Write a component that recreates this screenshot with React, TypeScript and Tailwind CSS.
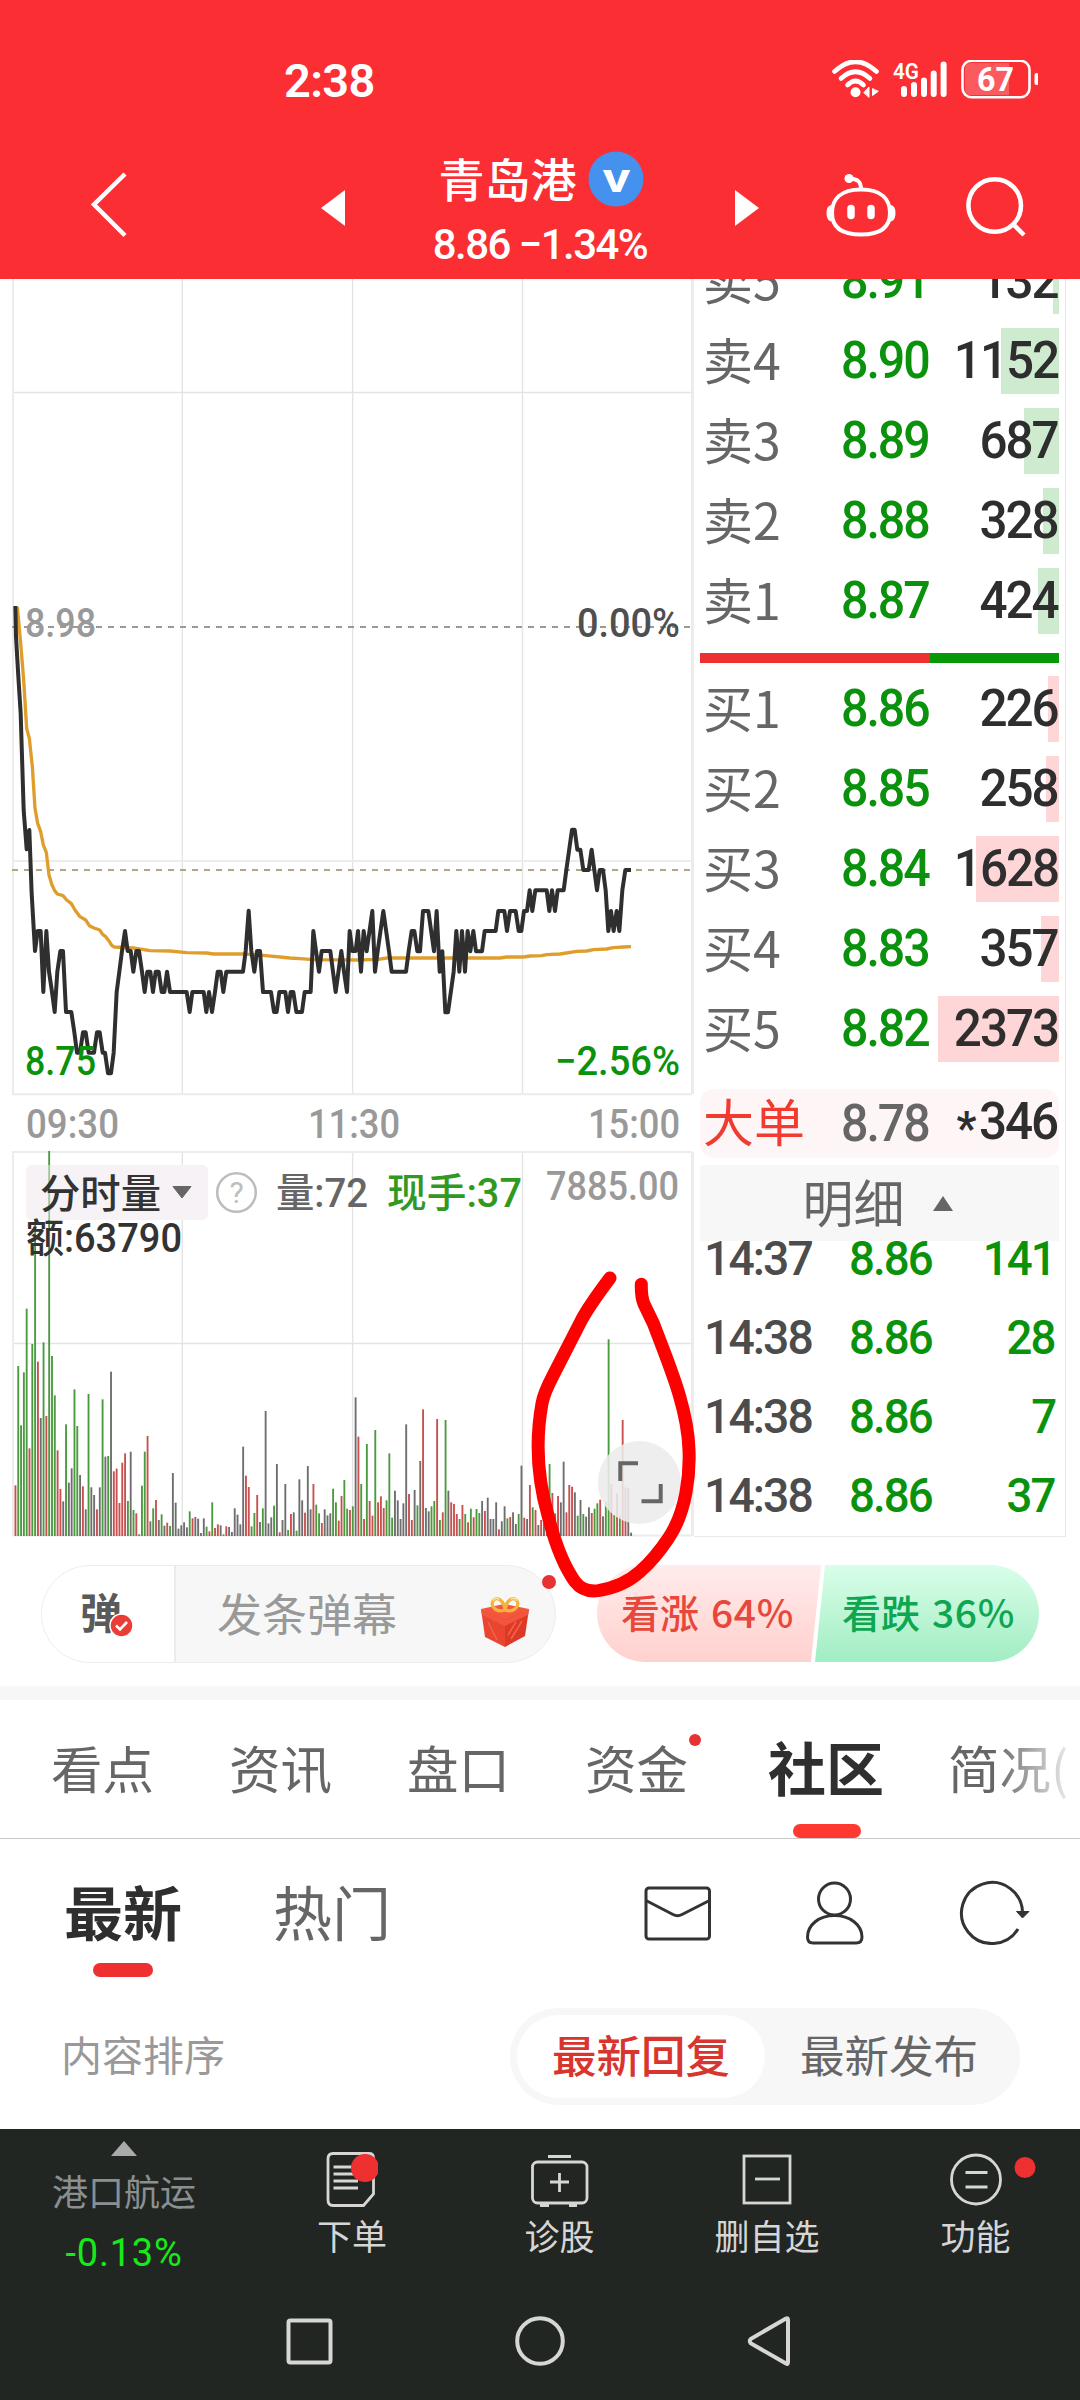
import type { ReactNode } from "react";
import { clsx } from "clsx";

const sans = "font-['Roboto','Noto_Sans_CJK_SC',sans-serif]";
const cjk = "font-['Noto_Sans_CJK_SC',sans-serif]";

const asks = [
    { label: "卖5", price: "8.91", qty: "132", bar: 6 },
    { label: "卖4", price: "8.90", qty: "1152", bar: 58 },
    { label: "卖3", price: "8.89", qty: "687", bar: 35 },
    { label: "卖2", price: "8.88", qty: "328", bar: 16 },
    { label: "卖1", price: "8.87", qty: "424", bar: 21 },
];

const bids = [
    { label: "买1", price: "8.86", qty: "226", bar: 11 },
    { label: "买2", price: "8.85", qty: "258", bar: 13 },
    { label: "买3", price: "8.84", qty: "1628", bar: 83 },
    { label: "买4", price: "8.83", qty: "357", bar: 18 },
    { label: "买5", price: "8.82", qty: "2373", bar: 121 },
];

const trades = [
    { time: "14:37", price: "8.86", qty: "141" },
    { time: "14:38", price: "8.86", qty: "28" },
    { time: "14:38", price: "8.86", qty: "7" },
    { time: "14:38", price: "8.86", qty: "37" },
];

// chart coordinates are kept at three units per pixel
const pricePoints =
    "46,78 48,170 55,290 62,400 71,690 80,808 88,750 95,940 105,1113 113,1053 122,1053 130,1236 139,1053 147,1175 156,1236 164,1296 172,1175 181,1113 189,1113 198,1296 214,1296 223,1357 231,1418 240,1418 249,1357 257,1357 266,1418 282,1418 291,1357 299,1357 308,1418 315,1418 324,1480 333,1480 341,1418 350,1236 358,1175 366,1113 375,1053 383,1113 392,1113 400,1175 409,1113 417,1113 426,1175 434,1236 442,1175 451,1175 459,1236 467,1175 476,1175 485,1236 493,1236 501,1175 510,1236 560,1236 569,1296 577,1236 611,1236 619,1296 627,1236 636,1296 645,1236 653,1175 662,1175 670,1236 679,1175 729,1175 737,1113 746,992 754,1113 763,1175 771,1113 780,1113 789,1236 813,1236 822,1296 830,1296 838,1236 856,1236 864,1296 872,1236 880,1236 889,1296 906,1296 914,1236 932,1236 940,1053 948,1113 957,1175 965,1113 991,1113 999,1175 1007,1236 1024,1113 1032,1175 1041,1236 1049,1053 1057,1113 1067,1113 1074,1053 1083,1175 1091,1053 1100,1114 1117,993 1125,1175 1133,1114 1150,993 1167,1114 1175,1175 1218,1175 1226,1114 1235,1053 1243,1053 1252,1114 1260,1114 1269,993 1285,993 1302,1114 1310,993 1319,1175 1327,1114 1336,1297 1344,1297 1361,1175 1369,1053 1378,1175 1386,1053 1395,1175 1403,1053 1411,1114 1420,1053 1428,1114 1446,1114 1454,1053 1487,1053 1495,993 1513,993 1521,1053 1530,993 1547,993 1556,1053 1564,1053 1572,993 1581,993 1589,931 1597,993 1606,931 1640,931 1648,993 1656,931 1665,993 1673,931 1691,931 1699,870 1716,749 1724,749 1732,809 1741,809 1750,870 1766,870 1775,809 1783,870 1791,931 1799,870 1809,870 1817,931 1825,1053 1833,993 1841,1053 1850,993 1858,1053 1867,931 1876,870 1893,870";

const averagePoints =
    "52,80 62,190 71,300 80,445 88,475 97,560 105,685 113,730 122,755 130,795 139,818 147,885 156,915 164,932 172,942 189,947 200,960 214,971 225,990 240,1010 257,1020 268,1037 282,1044 299,1050 308,1063 316,1069 327,1083 335,1096 343,1101 400,1104 450,1112 510,1113 560,1118 620,1119 640,1122 730,1122 790,1126 870,1134 900,1136 940,1139 1075,1140 1135,1138 1160,1134 1500,1134 1520,1131 1570,1131 1590,1128 1625,1127 1640,1124 1680,1122 1730,1114 1760,1113 1780,1109 1820,1107 1840,1103 1870,1101 1893,1100";

// one entry a minute: r = up, g = down, k = flat, followed by the top of the bar
const volume =
    "r1036 g678 g856 g697 g506 r925 g612 g240 r665 k834 g607 r828 g33 g648 g766 r931 r1047 k1084 g853 k1028 k985 g748 g858 k1005 r1039 k1108 g762 k1042 k1065 r1108 k1042 g778 k950 g948 k695 r994 r986 r1089 r968 r940 g1083 k935 g1110 r1120 g1183 g1037 g935 r888 k1144 g1105 r1080 k1140 g1123 k1157 r1148 g1158 k999 k1088 k1166 k1156 k1147 k1162 g1114 r1135 k1131 k1136 k1179 k1135 g1160 r1174 g1087 r1164 r1153 k1156 g1183 r1159 k1161 k1176 k1105 k1124 k1153 k920 r1007 r1041 g1159 g1119 r1065 k1146 g1105 k813 k1150 k1132 g1097 k972 r1177 k1140 k1032 g1170 r1122 k1117 g1172 k1018 k1081 r1118 k978 k1108 r1032 g1094 g1120 r1149 k1108 k1126 k1120 g1046 g1087 r1142 r1068 g1020 g1106 r1110 g1099 k772 r890 g1032 r1137 g912 r1083 r1127 g870 r1087 r1069 r1104 g1081 g940 g1133 k1052 k1081 k1137 k1090 k853 r1062 r1140 k1050 g1096 k963 r808 k1104 k1114 g1099 g1083 r837 g1140 r1117 g840 k1052 r1087 r1092 r1122 g1137 r1095 g1122 r1147 g1106 r1132 g1107 g1119 k1083 r1113 k1073 k1137 k1137 k1087 r1168 k1144 k1099 g1135 r1131 k1117 k1152 g1122 k977 r1133 k1137 r1035 g1102 r1110 k1155 r1140 k1150 r1120 g972 r1059 g1120 r1068 k1087 k965 r1117 r1035 r1040 k1057 g1127 k1080 g1122 k1130 k1102 r1119 g1106 g1090 r1079 k1129 g1085 g598 r1032 g1125 r1060 g1127 r840 r1042 k1045 k1178"
        .split(" ")
        .map((v) => ({ kind: v[0], top: Number(v.slice(1)) }));

const volumeColors: Record<string, string> = { r: "#c9504f", g: "#4c9a40", k: "#6e6e6e" };

function StatusBar() {
    return (
        <div className="flex h-[160px] items-center justify-between pl-[284px] pr-[42px]">
            <span className="text-[47px] font-semibold leading-none tracking-[-0.015em]">2:38</span>
            <svg width="206" height="40" viewBox="832 60 206 40" fill="none" stroke="#fff" strokeLinecap="round">
                <g strokeWidth="4.6">
                    <path d="M834.5 71.5Q855.5 52 876.5 71.5" />
                    <path d="M841 78.500Q855.5 65 870 78.500" />
                    <path d="M847.500 85Q855.5 77 863.500 85" />
                </g>
                <circle cx="855.5" cy="92.300" r="5" fill="#fff" stroke="none" />
                <path d="M864 92.500l5-5.500v10zM872.500 89v6.500l5.500-4z" fill="#fff" strokeWidth="1" />
                <g strokeWidth="6">
                    <path d="M904 89v5M914 85v9M924 80.500v13.500M933.700 73.500v20.500M943.600 64.500v29.500" />
                </g>
                <text x="893" y="78.500" fontSize="22" fontWeight="600" fill="#fff" stroke="none" textLength="26" lengthAdjust="spacingAndGlyphs">4G</text>
                <path d="M971 63H1009V95H971Q965 95 965 89V69Q965 63 971 63Z" fill="#fff" fillOpacity=".22" stroke="none" />
                <rect x="962.500" y="60.800" width="67" height="36.500" rx="9" strokeWidth="2.6" />
                <path d="M1036.500 75v8" strokeWidth="4" />
                <text x="977" y="91" fontSize="33" fontWeight="700" fill="#fff" stroke="none" textLength="37" lengthAdjust="spacingAndGlyphs">67</text>
            </svg>
        </div>
    );
}

function Header() {
    return (
        <header className="h-[279px] bg-[#fa2e33] text-white">
            <StatusBar />
            <div className="flex h-[119px] pl-[88px] pr-[52px]">
                <svg className="mt-2" width="42" height="72" viewBox="88 168 42 72" fill="none" stroke="#fff" strokeWidth="4.500">
                    <path d="M125 174L94 204.500L125 235.500" />
                </svg>
                <svg className="ml-[191px] mt-[30px]" width="24" height="36" viewBox="0 0 24 36" fill="#fff">
                    <path d="M0 18L24 0V36Z" />
                </svg>
                <div className="flex flex-1 flex-col items-center">
                    <div className="-mt-[9px] flex h-[56px] items-center gap-[11px] pl-[2px]">
                        <span className={clsx(cjk, "mb-[5px] text-[46px] font-medium leading-none")}>青岛港</span>
                        <svg width="56" height="56" viewBox="0 0 56 56">
                            <circle cx="28" cy="28" r="27.500" fill="#4491ee" />
                            <text x="28.500" y="41" textAnchor="middle" fontSize="32" fontWeight="900" fill="#fff" textLength="27" lengthAdjust="spacingAndGlyphs">V</text>
                        </svg>
                    </div>
                    <span className="mt-[14px] text-[42px] font-medium leading-[48px] tracking-[-0.037em]">8.86 −1.34%</span>
                </div>
                <svg className="mt-[30px]" width="24" height="36" viewBox="0 0 24 36" fill="#fff">
                    <path d="M24 18L0 0V36Z" />
                </svg>
                <svg className="ml-[67px] mt-[13px]" width="70" height="66" viewBox="826 173 70 66" fill="none" stroke="#fff" strokeWidth="4">
                    <path d="M861 189.500C881 189.500 890 199 890 213C890 228 880 234.500 861 234.500C842 234.500 832 228 832 213C832 199 841 189.500 861 189.500Z" />
                    <path d="M861 189C861 181 857 179 850 178.500" />
                    <circle cx="849" cy="178.500" r="4.500" fill="#fff" stroke="none" />
                    <path d="M831 205Q826.500 206 826.500 213T831 221.500ZM891 205Q895.500 206 895.500 213T891 221.500Z" fill="#fff" stroke="none" />
                    <path d="M851 208.500v7M871 208.500v7" strokeWidth="7.500" strokeLinecap="round" />
                </svg>
                <svg className="ml-[70px] mt-[13px]" width="62" height="64" viewBox="966 173 62 64" fill="none" stroke="#fff" strokeWidth="4.500">
                    <circle cx="994.700" cy="205.500" r="26.300" />
                    <path d="M1012.500 223.500L1024 235" />
                </svg>
            </div>
        </header>
    );
}

function Label({ x, y, w, color, children, size = 40, weight = 500 }: { x: number; y: number; w: number; color: string; children: ReactNode; size?: number; weight?: number }) {
    return (
        <text x={x} y={y} fontSize={size} fontWeight={weight} fill={color} textLength={w} lengthAdjust="spacingAndGlyphs">
            {children}
        </text>
    );
}

function Charts() {
    return (
        <svg className="relative z-10 shrink-0 overflow-visible" width="694" height="1258" viewBox="0 279 694 1258" fill="none">
            <g stroke="#e4e4e4" strokeWidth="1.400">
                <path d="M182.300 279V1094M352.600 279V1094M522.500 279V1094M13 392.500H692" />
                <path d="M182.300 1152V1536M352.600 1152V1536M522.500 1152V1536M13 1343.500H692" />
            </g>
            <g stroke="#ececec" strokeWidth="2">
                <path d="M13 279V1094.300H692M13 861H692" />
                <path d="M13 1536V1152H692M13 1535.500H692" />
                <path d="M692.500 279V1094M692.500 1152V1536" strokeWidth="3" />
            </g>
            <path d="M12 627H692" stroke="#999" strokeWidth="1.800" strokeDasharray="6 6" />
            <path d="M12 870H692" stroke="#b3a683" strokeWidth="1.800" strokeDasharray="6 6" />

            <g transform="translate(0 580) scale(.33333)" strokeLinejoin="round">
                <polyline points={averagePoints} stroke="#df9e2b" strokeWidth="10" />
                <polyline points={pricePoints} stroke="#2f2f2f" strokeWidth="12" />
            </g>
            <Label x={25} y={636.700} w={71} color="#999">8.98</Label>
            <Label x={577} y={636.700} w={103} color="#4f4f4f">0.00%</Label>
            <Label x={25} y={1074.500} w={71} color="#0a920c">8.75</Label>
            <Label x={555} y={1074.500} w={125} color="#0a920c">−2.56%</Label>
            <Label x={26} y={1138} w={93} color="#999">09:30</Label>
            <Label x={308} y={1138} w={92} color="#999">11:30</Label>
            <Label x={588} y={1138} w={92} color="#999">15:00</Label>

            <rect x="26" y="1165" width="182" height="55" rx="6" fill="#f6f2f6" />
            <g transform="translate(0 1140) scale(.33333)">
                {volume.map((bar, i) => (
                    <rect key={i} x={43.500 + i * 8.434} y={bar.top} width="5.600" height={1188 - bar.top} fill={volumeColors[bar.kind]} />
                ))}
            </g>
            <rect x="26" y="1165" width="182" height="55" rx="6" fill="#f6f2f6" fillOpacity=".5" />
            <Label x={40} y={1208} w={121} color="#333">分时量</Label>
            <path d="M173 1186.500H191L182 1198Z" fill="#666" stroke="#666" strokeLinejoin="round" />
            <circle cx="236.500" cy="1192.500" r="19.300" stroke="#bdbdbd" strokeWidth="2.600" />
            <text x="236.500" y="1203" textAnchor="middle" fontSize="30" fill="#bdbdbd">?</text>
            <Label x={276} y={1207} w={92} color="#666">量:72</Label>
            <Label x={387} y={1207} w={135} color="#31991f">现手:37</Label>
            <Label x={546} y={1200} w={133} color="#999">7885.00</Label>
            <Label x={26} y={1252} w={156} color="#333">额:63790</Label>

            <circle cx="639.300" cy="1482.500" r="41.500" fill="#ececec" fillOpacity=".88" />
            <path d="M620.300 1481V1463.300H638M660.700 1484V1501.300H641.500" stroke="#666" strokeWidth="4" />

            {/* hand-drawn marker around the closing spike */}
            <path
                transform="translate(340 1140) scale(.33333)"
                d="M810 414Q745 500 722 545L640 705Q612 758 606 790C588 890 590 1010 625 1130C650 1230 680 1290 705 1325Q730 1358 775 1352Q850 1340 900 1295Q945 1255 985 1195C1040 1115 1050 1000 1047 930C1043 800 985 670 940 550L912 492Q903 470 904 433"
                stroke="#fe0000"
                strokeWidth="39"
                strokeLinecap="round"
                strokeLinejoin="round"
            />
        </svg>
    );
}

function QuoteRow({ label, price, qty, bar, tone }: { label: string; price: string; qty: string; bar: number; tone: string }) {
    return (
        <div className="relative flex h-20 items-center pl-[3px] text-[52px] leading-none">
            <div className={clsx("absolute right-[6px] top-[7px] h-[66px]", tone)} style={{ width: bar }} />
            <span className={clsx(cjk, "relative mb-[7px] w-[138px] text-[50px] leading-[72px] text-[#666]")}>{label}</span>
            <span className="relative origin-left scale-x-[.93] font-medium tracking-[-0.042em] text-[#0a920c]">{price}</span>
            <span className="relative ml-auto origin-right scale-x-[.95] pr-[8px] font-medium tracking-[-0.042em] text-[#2e2e2e]">{qty}</span>
        </div>
    );
}

function OrderBook() {
    return (
        <aside className="flex w-[372px] flex-col overflow-hidden border-b-[1.500px] border-r-[1.500px] border-[#e9e9e9] pl-[6px]">
            <div className="-mt-[38px]">
                {asks.map((row) => (
                    <QuoteRow key={row.label} {...row} tone="bg-[#ceebcf]" />
                ))}
            </div>
            <div className="mr-[6px] mt-3 flex h-[10px] shrink-0">
                <div className="w-[230px] bg-[#ed3131]" />
                <div className="flex-1 bg-[#069806]" />
            </div>
            <div className="mt-[6px]">
                {bids.map((row) => (
                    <QuoteRow key={row.label} {...row} tone="bg-[#fed6d8]" />
                ))}
            </div>
            <div className="mr-[6px] mt-5 flex h-[69px] shrink-0 items-center rounded-[14px] bg-[#fef5f6] pl-[3px] text-[52px] font-medium leading-none tracking-[-0.042em]">
                <span className={clsx(cjk, "mb-[6px] w-[138px] text-[51px] font-normal tracking-normal text-[#f13a30]")}>大单</span>
                <span className="origin-left scale-x-[.93] text-[#666]">8.78</span>
                <span className="ml-auto flex origin-right scale-x-[.95] pr-[2px] text-[#2e2e2e]">
                    <span className="mr-[5px] mt-[9px] text-[46px] font-bold">*</span>346
                </span>
            </div>
            <div className="mr-[6px] mt-[7px] flex h-[76px] shrink-0 items-center justify-center gap-[28px] bg-[#f7f7f7] pr-[4px] text-[#666]">
                <span className={clsx(cjk, "mb-[3px] text-[51px] leading-none")}>明细</span>
                <svg width="20" height="15" viewBox="0 0 20 15" fill="currentColor">
                    <path d="M10 0L20 15H0Z" />
                </svg>
            </div>
            <div className="-mt-[22px] [clip-path:inset(22px_0_0_0)]">
                {trades.map((t, i) => (
                    <div key={i} className="flex h-[79px] items-center pl-[4px] pr-[10px] text-[48px] font-medium leading-none tracking-[-0.042em] text-[#0a920c]">
                        <span className="w-[145px] origin-left scale-x-[.965] text-[#4c4c4c]">{t.time}</span>
                        <span className="origin-left scale-x-[.95]">{t.price}</span>
                        <span className="ml-auto origin-right scale-x-[.95]">{t.qty}</span>
                    </div>
                ))}
            </div>
        </aside>
    );
}

function GiftIcon() {
    return (
        <svg width="50" height="54" viewBox="0 0 50 54" fill="none">
            <path d="M1 14L24 9L49 14L25 26Z" fill="#f4573d" />
            <path d="M1 14L25 25V52L5 42Z" fill="#ea4530" />
            <path d="M49 14L25 25V52L45 41Z" fill="#de3826" />
            <path d="M1 14L25 25V31L2 20ZM49 14L25 25V31L48 20Z" fill="#f2553e" />
            <path d="M8 27L17 45M42 26L31 44M36 27L28 40" stroke="#f2644c" strokeWidth="1.500" />
            <path d="M25 15C17 18 10 12 13 6C17 0 24 6 25 15ZM25 15C33 18 40 12 37 6C33 0 26 6 25 15Z" stroke="#f3b43c" strokeWidth="3.200" />
            <path d="M13 5.500Q16 1.500 19 4.500M37 5.500Q34 1.500 31 4.500" stroke="#ffe49a" strokeWidth="1.500" />
        </svg>
    );
}

function DanmuBar() {
    return (
        <div className={clsx(cjk, "flex h-[149px] pl-[41px] pt-7")}>
            <div className="relative flex h-[98px] w-[515px] items-center rounded-full border border-[#ececec] bg-[#f7f7f7]">
                <div className="relative flex h-24 w-[134px] items-center rounded-l-full border-r-2 border-[#ececec] bg-white pb-[6px] pl-[38px]">
                    <span className="text-[42px] font-bold leading-none text-[#5a5a5a]">弹</span>
                    <svg className="absolute left-[67px] top-[47px]" width="25" height="25" viewBox="0 0 25 25" fill="none">
                        <circle cx="12.500" cy="12.500" r="11.500" fill="#e93d35" stroke="#fff" strokeWidth="1.500" />
                        <path d="M7 12.500L11 16.500L18 9" stroke="#fff" strokeWidth="2.600" />
                    </svg>
                </div>
                <span className="mb-1 ml-[41px] text-[45px] leading-none text-[#999]">发条弹幕</span>
                <div className="ml-auto mr-[25px] mt-[16px]">
                    <GiftIcon />
                </div>
                <div className="absolute right-[-1px] top-[9px] size-[14px] rounded-full bg-[#e63232]" />
            </div>
            <div className="ml-[41px] flex h-[97px] w-[442px] text-[39px] font-medium leading-none">
                <div className="flex w-[224px] items-center rounded-l-full bg-linear-to-b from-[#ffecec] to-[#ffd1ce] pb-1 pl-6 text-[#e8473c] [clip-path:polygon(0_0,100%_0,95.500%_100%,0_100%)]">
                    看涨<span className="ml-[12px] tracking-[0.015em]">64%</span>
                </div>
                <div className="-ml-[6px] flex w-[224px] items-center rounded-r-full bg-linear-to-b from-[#d9fee9] to-[#a1edc3] pb-1 pl-[27px] text-[#0ea650] [clip-path:polygon(4.500%_0,100%_0,100%_100%,0_100%)]">
                    看跌<span className="ml-[12px] tracking-[0.015em]">36%</span>
                </div>
            </div>
        </div>
    );
}

function Tabs() {
    return (
        <nav className={clsx(cjk, "relative flex h-[139px] overflow-hidden border-b-[1.500px] border-[#c9c9c9] pl-[51px] text-[51.500px] leading-[133px] text-[#666]")}>
            <span className="w-[178px] shrink-0">看点</span>
            <span className="w-[178px] shrink-0">资讯</span>
            <span className="w-[178px] shrink-0">盘口</span>
            <span className="relative w-[183px] shrink-0">
                资金
                <i className="absolute left-[104px] top-[34px] size-3 rounded-full bg-[#e63232]" />
            </span>
            <span className="relative w-[180px] shrink-0 text-[58px] font-bold text-[#2f2f2f]">
                社区
                <i className="absolute bottom-0 left-[25px] h-[14px] w-[68px] rounded-full bg-[#ff3932]" />
            </span>
            <span className="shrink-0">简况(</span>
            <div className="absolute right-0 h-full w-[85px] bg-linear-to-r from-transparent to-white" />
        </nav>
    );
}

function CommunityBar() {
    return (
        <div className={cjk}>
            <div className="flex h-[146px] items-center pl-[64px] leading-none">
                <div className="relative mb-[4px] w-[209px] text-[59px] font-bold text-[#2f2f2f]">
                    最新
                    <i className="absolute left-[29px] top-[82px] h-[14px] w-[60px] rounded-full bg-[#ef3030]" />
                </div>
                <span className="mb-[4px] w-[371px] text-[59px] text-[#666]">热门</span>
                <svg width="386" height="66" viewBox="644 1880 386 66" fill="none" stroke="#333" strokeWidth="3">
                    <rect x="646" y="1889" width="63.500" height="51" rx="3" />
                    <path d="M646 1901.500L673 1915.500Q677.500 1918 682 1915.500L709.500 1901.500" />
                    <circle cx="834.500" cy="1900" r="16" />
                    <path d="M834.500 1916.500C819 1916.500 807.500 1926 807.500 1938Q807.500 1944 813 1944H856Q862 1944 862 1938C862 1926 850 1916.500 834.500 1916.500Z" />
                    <path d="M1022.500 1915A30.500 30.500 0 1 0 1018 1930" />
                    <path d="M1016.500 1912.500H1029L1022.500 1919Z" fill="#333" strokeWidth="1" />
                </svg>
            </div>
            <div className="flex h-[144px] items-center pb-[2px] pl-[61px]">
                <span className="mb-[5px] w-[449px] text-[41px] leading-none text-[#999]">内容排序</span>
                <div className="flex h-[97px] w-[510px] items-center rounded-full bg-[#f7f7f7] px-[7px] text-[44.500px] leading-none text-[#666]">
                    <span className="flex h-[83px] w-[248px] items-center rounded-full bg-white pb-[3px] pl-[35px] font-medium text-[#d8352f]">最新回复</span>
                    <span className="pb-[3px] pl-[35px]">最新发布</span>
                </div>
            </div>
        </div>
    );
}

function BottomBar() {
    return (
        <footer className={clsx(cjk, "h-[271px] bg-[#222622] text-[35px] leading-none text-[#d6d6d6]")}>
            <div className="flex h-[150px] pt-3">
                <div className="flex w-[248px] flex-col items-center">
                    <svg width="26" height="15" viewBox="0 0 26 15" fill="#aaa">
                        <path d="M13 0L26 15H0Z" />
                    </svg>
                    <span className="mt-[16px] text-[36px] text-[#8a8f92]">港口航运</span>
                    <span className="font-['Roboto',sans-serif] mt-[26px] text-[38px] tracking-[0.02em] text-[#16ea1a]">-0.13%</span>
                </div>
                <div className="flex w-[208px] flex-col items-center pt-[9px]">
                    <svg width="52" height="58" viewBox="328 2150 52 58" fill="none" stroke="#d6d6d6" strokeWidth="2.800">
                        <path d="M335 2153.500H371Q375.500 2153.500 375.500 2158V2194L365.500 2205.500H335Q330 2205.500 330 2200V2159Q330 2153.500 335 2153.500Z" />
                        <path d="M335.500 2167H358M335.500 2174H358M335.500 2181H360M335.500 2188H360" />
                        <circle cx="367" cy="2168" r="14" fill="#ee3030" stroke="none" />
                    </svg>
                    <span className="mt-[9px]">下单</span>
                </div>
                <div className="flex w-[207px] flex-col items-center pt-[9px]">
                    <svg width="60" height="58" viewBox="530 2150 60 58" fill="none" stroke="#d6d6d6" strokeWidth="2.800">
                        <rect x="532.500" y="2162" width="54.500" height="41" rx="5" />
                        <path d="M548 2156.500H571M550 2182H569M559.500 2173V2192M540 2205.500H549M569 2205.500H577" />
                    </svg>
                    <span className="mt-[9px]">诊股</span>
                </div>
                <div className="flex w-[208px] flex-col items-center pt-[9px]">
                    <svg width="50" height="58" viewBox="742 2150 50 58" fill="none" stroke="#d6d6d6" strokeWidth="2.800">
                        <rect x="744" y="2156" width="46" height="47" />
                        <path d="M755 2179H780" />
                    </svg>
                    <span className="mt-[9px]">删自选</span>
                </div>
                <div className="flex w-[209px] flex-col items-center pt-[9px]">
                    <svg className="overflow-visible" width="52" height="58" viewBox="949.500 2150 52 58" fill="none" stroke="#d6d6d6" strokeWidth="2.800">
                        <circle cx="975.500" cy="2179.500" r="24.500" />
                        <path d="M965 2172.500H987M965 2187H987" />
                        <circle cx="1024.500" cy="2167.500" r="10.500" fill="#ee3030" stroke="none" />
                    </svg>
                    <span className="mt-[9px]">功能</span>
                </div>
            </div>
            <svg className="ml-[280px] mt-[32px]" width="520" height="60" viewBox="280 2311 520 60" fill="none" stroke="#d6d6d6" strokeWidth="4">
                <rect x="288.500" y="2320.500" width="42" height="42" rx="2" />
                <circle cx="540" cy="2341" r="22.800" />
                <path d="M786 2318.500Q788 2317.500 788 2320V2362Q788 2365 786 2363.500L751 2343.500Q748.500 2341 751 2338.800Z" />
            </svg>
        </footer>
    );
}

export default function App() {
    return (
        <div className={clsx(sans, "h-[2400px] w-[1080px] overflow-hidden bg-white")}>
            <Header />
            <main>
                <section className="flex h-[1258px]">
                    <Charts />
                    <OrderBook />
                </section>
                <DanmuBar />
                <div className="h-[14px] bg-[#f7f7f7]" />
                <Tabs />
                <CommunityBar />
            </main>
            <BottomBar />
        </div>
    );
}
